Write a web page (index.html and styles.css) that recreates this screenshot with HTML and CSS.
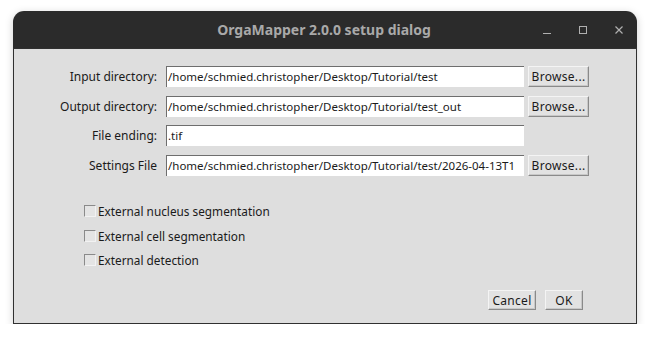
FILE: index.html
```html
<!DOCTYPE html>
<html lang="en">
<head>
  <meta charset="UTF-8">
  <title>OrgaMapper 2.0.0 setup dialog</title>
  <link rel="stylesheet" href="styles.css">
</head>
<body>
  <div class="window">
    <!-- Barra de título -->
    <div class="titlebar">
      <span class="title">OrgaMapper 2.0.0 setup dialog</span>
      <div class="controls">
        <svg width="10" height="10" viewBox="0 0 10 10"><path d="M1 8.5h8" stroke="#b0b0b0" stroke-width="1"/></svg>
        <svg width="10" height="10" viewBox="0 0 10 10"><rect x="1.5" y="1.5" width="7" height="7" fill="none" stroke="#b0b0b0" stroke-width="1"/></svg>
        <svg width="10" height="10" viewBox="0 0 10 10"><path d="M1.5 1.5l7 7M8.5 1.5l-7 7" stroke="#b0b0b0" stroke-width="1.2"/></svg>
      </div>
    </div>

    <!-- Contenido -->
    <div class="content">
      <div class="form">
        <label class="label">Input directory:</label>
        <div class="field">/home/schmied.christopher/Desktop/Tutorial/test</div>
        <button class="btn">Browse...</button>

        <label class="label">Output directory:</label>
        <div class="field">/home/schmied.christopher/Desktop/Tutorial/test_out</div>
        <button class="btn">Browse...</button>

        <label class="label">File ending:</label>
        <div class="field">.tif</div>
        <span></span>

        <label class="label">Settings File</label>
        <div class="field">/home/schmied.christopher/Desktop/Tutorial/test/2026-04-13T1</div>
        <button class="btn">Browse...</button>
      </div>

      <div class="checks">
        <div class="check"><span class="box"></span>External nucleus segmentation</div>
        <div class="check"><span class="box"></span>External cell segmentation</div>
        <div class="check"><span class="box"></span>External detection</div>
      </div>

      <div class="footer">
        <button class="btn cancel">Cancel</button>
        <button class="btn ok">OK</button>
      </div>
    </div>
  </div>
</body>
</html>
```

FILE: styles.css
```css
/* General */
body {
  margin: 0;
  padding: 0;
  background-color: #ffffff;
  font-family: "Noto Sans", "DejaVu Sans", sans-serif;
  font-size: 12px;
  color: #1a1a1a;
}

/* Ventana */
.window {
  margin: 11px 0 0 13px;
  width: 624px;
  height: 313px;
  display: flex;
  flex-direction: column;
  border-radius: 11px 11px 0 0;
  box-shadow: 0 2px 8px rgba(0, 0, 0, 0.18);
}

.titlebar {
  height: 37px;
  background-color: #2b2b2b;
  border-radius: 11px 11px 0 0;
  display: flex;
  align-items: center;
  justify-content: center;
  position: relative;
}

.title {
  color: #a9a9a9;
  font-family: "Noto Sans", sans-serif;
  font-weight: bold;
  font-size: 14px;
  padding-right: 2px;
}

.controls {
  position: absolute;
  right: 13px;
  top: 14px;
  display: flex;
  gap: 26px;
}

.content {
  flex: 1;
  background-color: #dedede;
  border: 1px solid #303030;
  display: flex;
  flex-direction: column;
  padding-top: 17px;
}

/* Formulario */
.form {
  display: grid;
  grid-template-columns: 143px 358px 60px;
  grid-auto-rows: 21px;
  column-gap: 9px;
  row-gap: 8.7px;
}

.form .btn {
  margin-left: -5px;
  width: 61px;
}

.label {
  text-align: right;
  line-height: 21px;
  white-space: nowrap;
}

.field {
  background-color: #ffffff;
  border-top: 1px solid #6e6e6e;
  border-left: 1px solid #6e6e6e;
  padding-left: 1px;
  font-size: 11.5px;
  line-height: 20px;
  white-space: nowrap;
  overflow: hidden;
}

.btn {
  font-family: "Noto Sans", "DejaVu Sans", sans-serif;
  font-size: 12px;
  color: #1a1a1a;
  background-color: #e2e2e2;
  border: 1px solid;
  border-color: #f4f4f4 #8a8a8a #8a8a8a #f4f4f4;
  box-shadow: inset -1px -1px 0 #c8c8c8;
  padding: 0;
  height: 21px;
  letter-spacing: 0.3px;
}

/* Casillas */
.checks {
  margin: 23px 0 0 70px;
  font-size: 11.8px;
  display: flex;
  flex-direction: column;
}

.check {
  height: 24.5px;
  display: flex;
  align-items: center;
  white-space: nowrap;
}

.box {
  width: 10px;
  height: 10px;
  margin-right: 2px;
  background-color: #e4e4e4;
  border: 1px solid;
  border-color: #8a8a8a #f2f2f2 #f2f2f2 #8a8a8a;
}

/* Botones inferiores */
.footer {
  margin-top: auto;
  display: flex;
  justify-content: flex-end;
  gap: 9px;
  padding: 0 53px 13px 0;
}

.footer .btn {
  height: 20px;
}

.cancel {
  width: 48px;
}

.ok {
  width: 38px;
}
```
